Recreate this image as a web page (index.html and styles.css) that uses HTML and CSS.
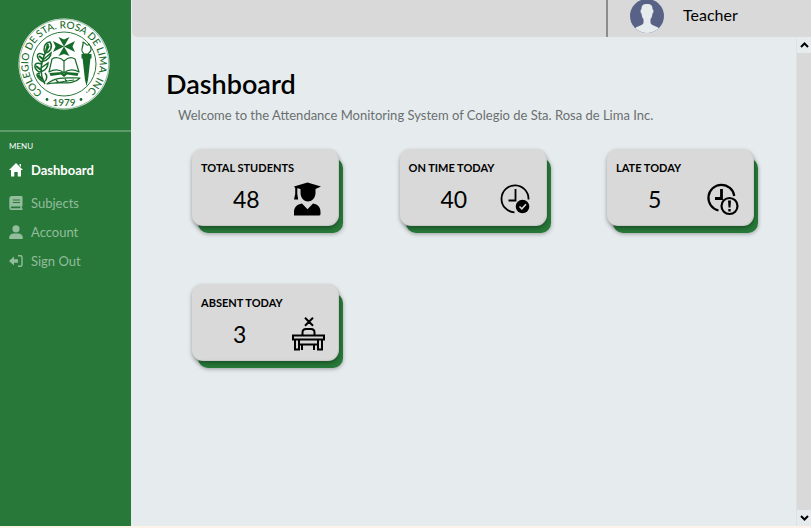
FILE: index.html
```html
<!DOCTYPE html>
<html lang="en">
<head>
<meta charset="utf-8">
<meta name="viewport" content="width=device-width, initial-scale=1">
<title>Dashboard</title>
<link rel="stylesheet" href="styles.css">
</head>
<body>
<div class="app">
  <aside class="sidebar">
    <div class="brand">
      <svg class="seal" viewBox="0 0 92 92" role="img" aria-label="School seal">
        <defs>
          <path id="arc-top" d="M24 74A35.600 35.600 0 1 1 68 74"/>
        </defs>
        <circle cx="46" cy="46" r="45.500" fill="#fff"/>
        <circle cx="46" cy="46" r="44.800" fill="none" stroke="#277839" stroke-width=".5"/>
        <circle cx="46" cy="46" r="32" fill="none" stroke="#277839" stroke-width="1"/>
        <text class="seal-text"><textPath href="#arc-top" startOffset="50%" text-anchor="middle">COLEGIO DE STA. ROSA DE LIMA, INC.</textPath></text>
        <text class="seal-year" x="46" y="88" text-anchor="middle">1979</text>
        <circle cx="29" cy="81.500" r="1.400" fill="#176b2a"/>
        <circle cx="63" cy="81.500" r="1.400" fill="#176b2a"/>
        <g fill="#176b2a">
          <path d="M46 28.500L40.500 19L46 21.500L51.500 19ZM46 28.500L40.500 38L46 36L51.500 38ZM46 28.500L35 23L37.500 28.500L35 34ZM46 28.500L57 23L54.500 28.500L57 34Z"/>
          <path d="M31.500 55L44 54L46 56L48 54L60.500 55L59.500 58L49 56.500L46 59L43 56.500L32.500 58Z"/>
          <path d="M64.500 40H72.500L70 62L68.500 68L67 62ZM63.500 36H73.500V40.500H63.500Z"/>
        </g>
        <g fill="#fff" stroke="#176b2a" stroke-width="1.200" stroke-linejoin="round">
          <path d="M46 43C42 39 37 39 34 41L31 54C36 51 42 51 46 55C50 51 56 51 61 54L57 41C54 39 50 39 46 43V55"/>
          <path d="M66 36C61 31 66 30 65 24C69 26 69 29 71 26C74 30 74 33 70 36Z"/>
          <path d="M68 44L69 59"/>
          <path d="M29 66C38 58 50 60 62 60C55 68 41 63 29 66ZM29 66L56 62M38 62L41 65M47 61L49 64"/>
        </g>
        <g fill="none" stroke="#176b2a" stroke-width="1.500">
          <path d="M27 66C21 56 22 43 31 28"/>
          <path d="M32 24C26 25 25 31 27 35C33 34 35 28 32 24ZM26 37C19 33 17 38 23 44C30 43 33 38 33 35L26 41M23 46C17 43 14 49 21 54C29 53 30 47 30 45L23 50M22 56C17 54 18 60 26 64C30 61 29 57 27 55"/>
          <path d="M30 26L28 33M21 38L26 42M18 48L23 52M20 57L25 62" stroke-width="2.200"/>
        </g>
      </svg>
    </div>
    <nav class="menu" aria-label="Menu">
      <p class="menu-title">MENU</p>
      <a class="menu-link active" href="#">
        <svg class="menu-icon" viewBox="0 0 14 14" fill="currentColor"><path d="M7 0L14 7H12V13.500H8.700V9H5.300V13.500H2V7H0ZM10.500 1H12V4L10.500 2.500Z"/></svg>Dashboard</a>
      <a class="menu-link" href="#">
        <svg class="menu-icon" viewBox="0 0 14 14" fill="currentColor"><path fill-rule="evenodd" d="M2.500 0H12.500Q13.500 0 13.500 1V9.500Q13.500 10.300 12.800 10.500V12.300H13.500V14H2.500Q.3 14 .3 11.500V2.500Q.3 0 2.500 0ZM3.800 3.500V4.500H11V3.500ZM3.800 6V7H11V6ZM2.700 10.500Q1.800 10.500 1.800 11.400T2.700 12.300H11.300V10.500Z"/></svg>Subjects</a>
      <a class="menu-link" href="#">
        <svg class="menu-icon" viewBox="0 0 14 14" fill="currentColor"><circle cx="7" cy="3.800" r="3.600"/><path d="M.2 14V13Q.2 8.500 5 8.500H9Q13.800 8.500 13.800 13V14Z"/></svg>Account</a>
      <a class="menu-link" href="#">
        <svg class="menu-icon" viewBox="0 0 14 14"><path d="M0 7L5 2.500V5.200H9V8.800H5V11.500Z" fill="currentColor"/><path d="M9 1.800H11.500Q13 1.800 13 3.300V10.700Q13 12.200 11.500 12.200H9" fill="none" stroke="currentColor" stroke-width="1.400"/></svg>Sign Out</a>
    </nav>
  </aside>

  <div class="page">
    <header class="topbar">
      <div class="user">
        <svg class="avatar" viewBox="0 0 34 34" role="img" aria-label="Profile picture">
          <circle cx="17" cy="17" r="17" fill="#576286"/>
          <path d="M11.500 10C11.500 6 13.500 5 17 5S22.500 6 22.500 10C24 11 23.500 14 22.500 14.500C22.200 18 21 19.500 20.500 20V24C22 27 26 26.500 28.800 29.200C22 35.500 12 35.500 5.200 29.200C8 26.500 12 27 13.500 24V20C13 19.500 11.800 18 11.500 14.500C10.500 14 10 11 11.500 10Z" fill="#e6ecee"/>
        </svg>
        <span class="user-name">Teacher</span>
      </div>
    </header>
    <div class="view">
      <main class="content">
        <h1 class="title">Dashboard</h1>
        <p class="welcome">Welcome to the Attendance Monitoring System of Colegio de Sta. Rosa de Lima Inc.</p>
        <div class="cards">
          <section class="card">
            <h2 class="card-title">TOTAL STUDENTS</h2>
            <div class="card-body">
              <span class="card-value">48</span>
              <svg class="card-icon" viewBox="0 0 34 34"><path d="M3 4.500L16.500 .5L30 4.500L24.500 7V11C24.500 16 20.500 19.500 17 19.500S9.500 16 9.500 11V7L6.300 6.300V12L7.200 17.500H3L4.200 12V6Z"/><path d="M3 33.500V30C3 25 6 22.500 11 21.500L16.500 27.300L22 21.500C27 22.500 29.500 25 29.500 30V32Q29.500 33.500 28 33.500Z"/></svg>
            </div>
          </section>
          <section class="card">
            <h2 class="card-title">ON TIME TODAY</h2>
            <div class="card-body">
              <span class="card-value">40</span>
              <svg class="card-icon" viewBox="0 0 34 34"><g fill="none" stroke="#000" stroke-width="1.800"><path d="M15.500 30.300A13.500 13.500 0 1 1 29.500 17.500"/><path d="M16.500 7V18.500H9.500"/></g><circle cx="23.500" cy="24.500" r="6.800"/><path d="M20.500 24.500L22.800 26.800L27 22.300" fill="none" stroke="#d9d9d9" stroke-width="1.600"/></svg>
            </div>
          </section>
          <section class="card">
            <h2 class="card-title">LATE TODAY</h2>
            <div class="card-body">
              <span class="card-value">5</span>
              <svg class="card-icon" viewBox="0 0 34 34"><g fill="none" stroke="#000" stroke-width="2.200"><path d="M12.500 28.500A13 13 0 1 1 28.300 14"/><path d="M15.500 7V16.500H9" stroke-width="2.800"/><circle cx="23.500" cy="24" r="8"/></g><path d="M22 18.500H25L24.500 25.500H22.500ZM22.300 27H24.700V29.500H22.300Z"/></svg>
            </div>
          </section>
          <section class="card">
            <h2 class="card-title">ABSENT TODAY</h2>
            <div class="card-body">
              <span class="card-value">3</span>
              <svg class="card-icon" viewBox="0 0 34 34"><g fill="none" stroke="#000" stroke-width="2"><path d="M14 .8L22 8.800M22 .8L14 8.800M11.500 18V15.500Q11.500 12 15 12H20Q23.500 12 23.500 15.500V18M2 18.500H33V22.500H2ZM4 22.500V32.500H8V22.500M27 22.500V32.500H31V22.500M8 27.500H27M11 27.500V33M23 27.500V33"/></g></svg>
            </div>
          </section>
        </div>
      </main>
      <div class="scrollbar">
        <button class="scroll-button" type="button" aria-label="Scroll up"><svg class="chevron" viewBox="0 0 9 6"><path d="M1 5L4.500 1.500L8 5"/></svg></button>
        <div class="scroll-thumb"></div>
        <button class="scroll-button" type="button" aria-label="Scroll down"><svg class="chevron" viewBox="0 0 9 6"><path d="M1 1L4.500 4.500L8 1"/></svg></button>
      </div>
    </div>
  </div>
</div>
</body>
</html>
```
FILE: styles.css
```css
* { box-sizing: border-box; }

body {
  margin: 0;
  background: #fff2ea;
  color: #000;
  font-family: Lato, "Liberation Sans", sans-serif;
}

h1, h2, p { margin: 0; }

.app {
  display: flex;
  min-height: 100vh;
  border-bottom: 2px solid #fff2ea;
}

/* Sidebar */
.sidebar {
  flex: none;
  width: 131px;
  background: #277839;
  color: #fff;
}

.brand {
  display: flex;
  justify-content: center;
  padding: 18px 0 20px;
  margin-right: 4px;
}

.seal { width: 92px; height: 92px; }

.seal-text {
  fill: #176b2a;
  font-size: 10px;
  font-weight: 500;
}

.seal-year {
  fill: #176b2a;
  font-size: 10px;
  font-weight: 500;
}

.menu {
  display: flex;
  flex-direction: column;
  border-top: 2px solid #5c9b69;
  padding: 9px;
}

.menu-title {
  font-size: 8px;
  line-height: 10px;
  margin-bottom: 6px;
}

.menu-link {
  display: flex;
  align-items: center;
  gap: 8px;
  height: 29px;
  color: #93bd9c;
  font-size: 13px;
  text-decoration: none;
}

.menu-link.active {
  color: #fff;
  font-weight: 700;
  height: 25px;
  margin-bottom: 6px;
}

.menu-icon { width: 14px; height: 14px; }

/* Page */
.page {
  flex: 1;
  display: flex;
  flex-direction: column;
  background: #e6ecee;
}

.topbar {
  display: flex;
  justify-content: flex-end;
  height: 37px;
  margin-left: 1px;
  background: #d9d9d9;
  border-bottom-left-radius: 5px;
}

.user {
  display: flex;
  align-items: center;
  gap: 19px;
  width: 205px;
  padding: 0 0 5px 22px;
  border-left: 2px solid #8c8c8c;
}

.avatar { width: 34px; height: 34px; }

.user-name {
  font-size: 16px;
  line-height: 18px;
  padding-bottom: 2px;
}

.view {
  flex: 1;
  display: flex;
}

.content {
  flex: 1;
  padding: 30px 42px 0 35px;
}

.title {
  font-size: 27px;
  line-height: 34px;
  font-weight: 600;
}

.welcome {
  margin: 5px 0 25px 12px;
  color: #6b6f70;
  font-size: 13px;
  line-height: 18px;
}

.cards {
  display: grid;
  grid-template-columns: repeat(3, 147px);
  justify-content: space-between;
  row-gap: 58px;
  padding-left: 26px;
}

.card {
  height: 77px;
  padding: 12px 9px 0;
  border-radius: 11px;
  background: #d9d9d9;
  box-shadow: 0 2px 4px rgba(0, 0, 0, .35), inset -1px -1px 1px rgba(0, 0, 0, .08), 5px 8px 0 -1px #277839, 5px 9px 4px -1px rgba(0, 0, 0, .35);
}

.card-title {
  font-size: 11px;
  line-height: 14px;
  font-weight: 700;
}

.card-body {
  display: flex;
  align-items: center;
  justify-content: space-between;
  padding: 7px 5px 0 32px;
}

.card-value {
  font-size: 23px;
  line-height: 34px;
}

.card-icon { width: 34px; height: 34px; }

/* Scrollbar */
.scrollbar {
  display: flex;
  flex-direction: column;
  width: 15px;
  border-left: 1px solid #dce1e3;
}

.scroll-thumb {
  flex: 1;
  background: #d9d9d9;
}

.scroll-button {
  display: flex;
  align-items: center;
  justify-content: center;
  height: 16px;
  padding: 0;
  border: 0;
  background: #e6ecee;
}

.chevron {
  width: 9px;
  height: 6px;
  fill: none;
  stroke: #000;
  stroke-width: 2;
}
```
